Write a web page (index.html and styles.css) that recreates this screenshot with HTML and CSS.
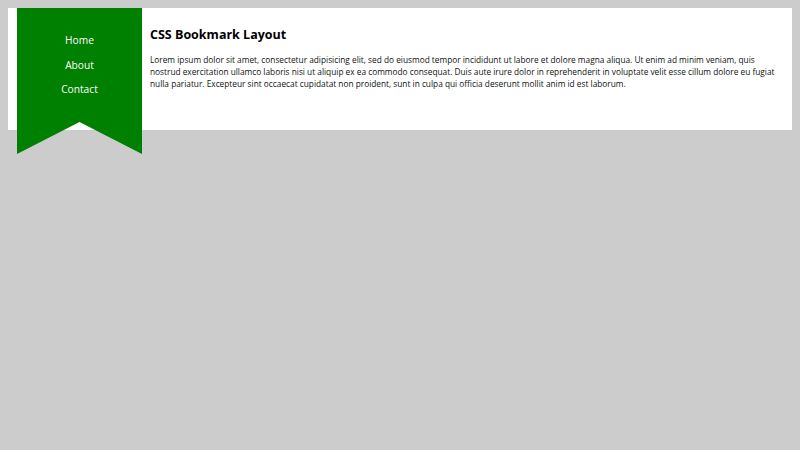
FILE: index.html
```html
<!DOCTYPE html>
<html>
<head>
<meta charset="utf-8">
<link rel="stylesheet" href="styles.css">
</head>
<body>
<div class="page">
  <nav class="bookmark">
    <ul class="menu">
      <li>Home</li>
      <li>About</li>
      <li>Contact</li>
    </ul>
  </nav>
  <main class="content">
    <h1 class="title">CSS Bookmark Layout</h1>
    <p class="text">Lorem ipsum dolor sit amet, consectetur adipisicing elit, sed do eiusmod tempor incididunt ut labore et dolore magna aliqua. Ut enim ad minim veniam, quis nostrud exercitation ullamco laboris nisi ut aliquip ex ea commodo consequat. Duis aute irure dolor in reprehenderit in voluptate velit esse cillum dolore eu fugiat nulla pariatur. Excepteur sint occaecat cupidatat non proident, sunt in culpa qui officia deserunt mollit anim id est laborum.</p>
  </main>
</div>
</body>
</html>
```
FILE: styles.css
```css
html, body {
  margin: 0;
  padding: 0;
}
body {
  box-sizing: border-box;
  min-height: 100vh;
  background: #cccccc;
  padding: 8px;
  font-family: "Open Sans", "Liberation Sans", sans-serif;
}
.page {
  display: flex;
  align-items: flex-start;
  background: #ffffff;
  height: 122px;
  padding-left: 9px;
}
.bookmark {
  flex: 0 0 125px;
  height: 146px;
  background: #008000;
  clip-path: polygon(0 0, 100% 0, 100% 146px, 50% 114px, 0 146px);
}
.menu {
  list-style: none;
  margin: 0;
  padding: 20px 0 0;
  text-align: center;
}
.menu li {
  color: #ffffff;
  font-size: 10.2px;
  line-height: 24.5px;
}
.content {
  flex: 1;
  padding: 0 8px;
}
.title {
  margin: 18px 0 10px;
  font-size: 12.5px;
  line-height: 18px;
  font-weight: 700;
  color: #000;
}
.text {
  margin: 0;
  font-size: 8.3px;
  line-height: 12px;
  color: #111;
}
```
